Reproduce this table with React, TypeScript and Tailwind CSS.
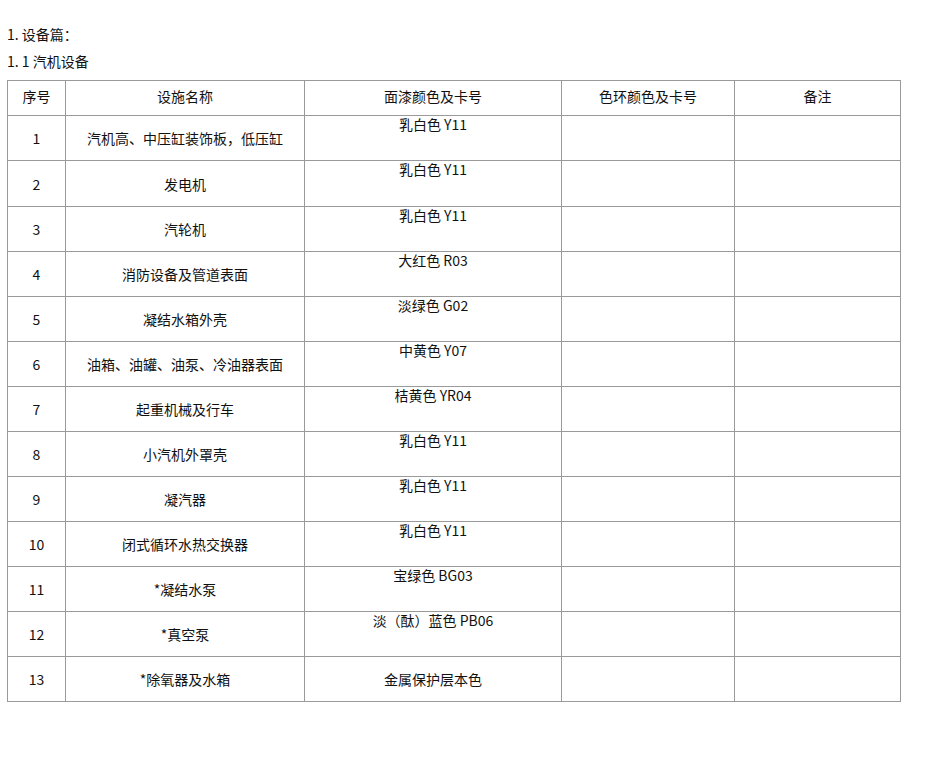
import React from 'react';

// Rows of the 汽机设备 table
const rows: { no: string; name: string; color: string; center?: boolean }[] = [
  { no: '1', name: '汽机高、中压缸装饰板，低压缸', color: '乳白色 Y11' },
  { no: '2', name: '发电机', color: '乳白色 Y11' },
  { no: '3', name: '汽轮机', color: '乳白色 Y11' },
  { no: '4', name: '消防设备及管道表面', color: '大红色 R03' },
  { no: '5', name: '凝结水箱外壳', color: '淡绿色 G02' },
  { no: '6', name: '油箱、油罐、油泵、冷油器表面', color: '中黄色 Y07' },
  { no: '7', name: '起重机械及行车', color: '桔黄色 YR04' },
  { no: '8', name: '小汽机外罩壳', color: '乳白色 Y11' },
  { no: '9', name: '凝汽器', color: '乳白色 Y11' },
  { no: '10', name: '闭式循环水热交换器', color: '乳白色 Y11' },
  { no: '11', name: '*凝结水泵', color: '宝绿色 BG03' },
  { no: '12', name: '*真空泵', color: '淡（酞）蓝色 PB06' },
  { no: '13', name: '*除氧器及水箱', color: '金属保护层本色', center: true },
];

const font = { fontFamily: '"Noto Sans CJK SC", "Liberation Sans", sans-serif' };

export default function App() {
  return (
    <div className="min-h-[758px] bg-white text-[14px] text-[#111] pl-[7px] pt-[24px]" style={font}>
      <p className="leading-[20px]">1. 设备篇：</p>
      <p className="leading-[20px] mt-[7px]">1. 1 汽机设备</p>
      <table className="mt-[9px] border-collapse table-fixed w-[893px]">
        <colgroup>
          <col className="w-[58px]" />
          <col className="w-[239px]" />
          <col className="w-[257px]" />
          <col className="w-[173px]" />
          <col className="w-[166px]" />
        </colgroup>
        <thead>
          <tr className="h-[35px]">
            {['序号', '设施名称', '面漆颜色及卡号', '色环颜色及卡号', '备注'].map(h => (
              <th key={h} className="border border-[#9a9a9a] font-normal text-center align-middle pb-[4px] leading-[20px]">
                {h}
              </th>
            ))}
          </tr>
        </thead>
        <tbody>
          {rows.map(r => (
            <tr key={r.no} className={r.no === '2' ? 'h-[46px]' : 'h-[45px]'}>
              <td className="border border-[#9a9a9a] text-center align-middle leading-[20px]">{r.no}</td>
              <td className="border border-[#9a9a9a] text-center align-middle leading-[20px]">{r.name}</td>
              <td className={`border border-[#9a9a9a] text-center ${r.center ? 'align-middle leading-[20px]' : 'align-top leading-[16px]'}`}>
                {r.color}
              </td>
              <td className="border border-[#9a9a9a]"></td>
              <td className="border border-[#9a9a9a]"></td>
            </tr>
          ))}
        </tbody>
      </table>
    </div>
  );
}
